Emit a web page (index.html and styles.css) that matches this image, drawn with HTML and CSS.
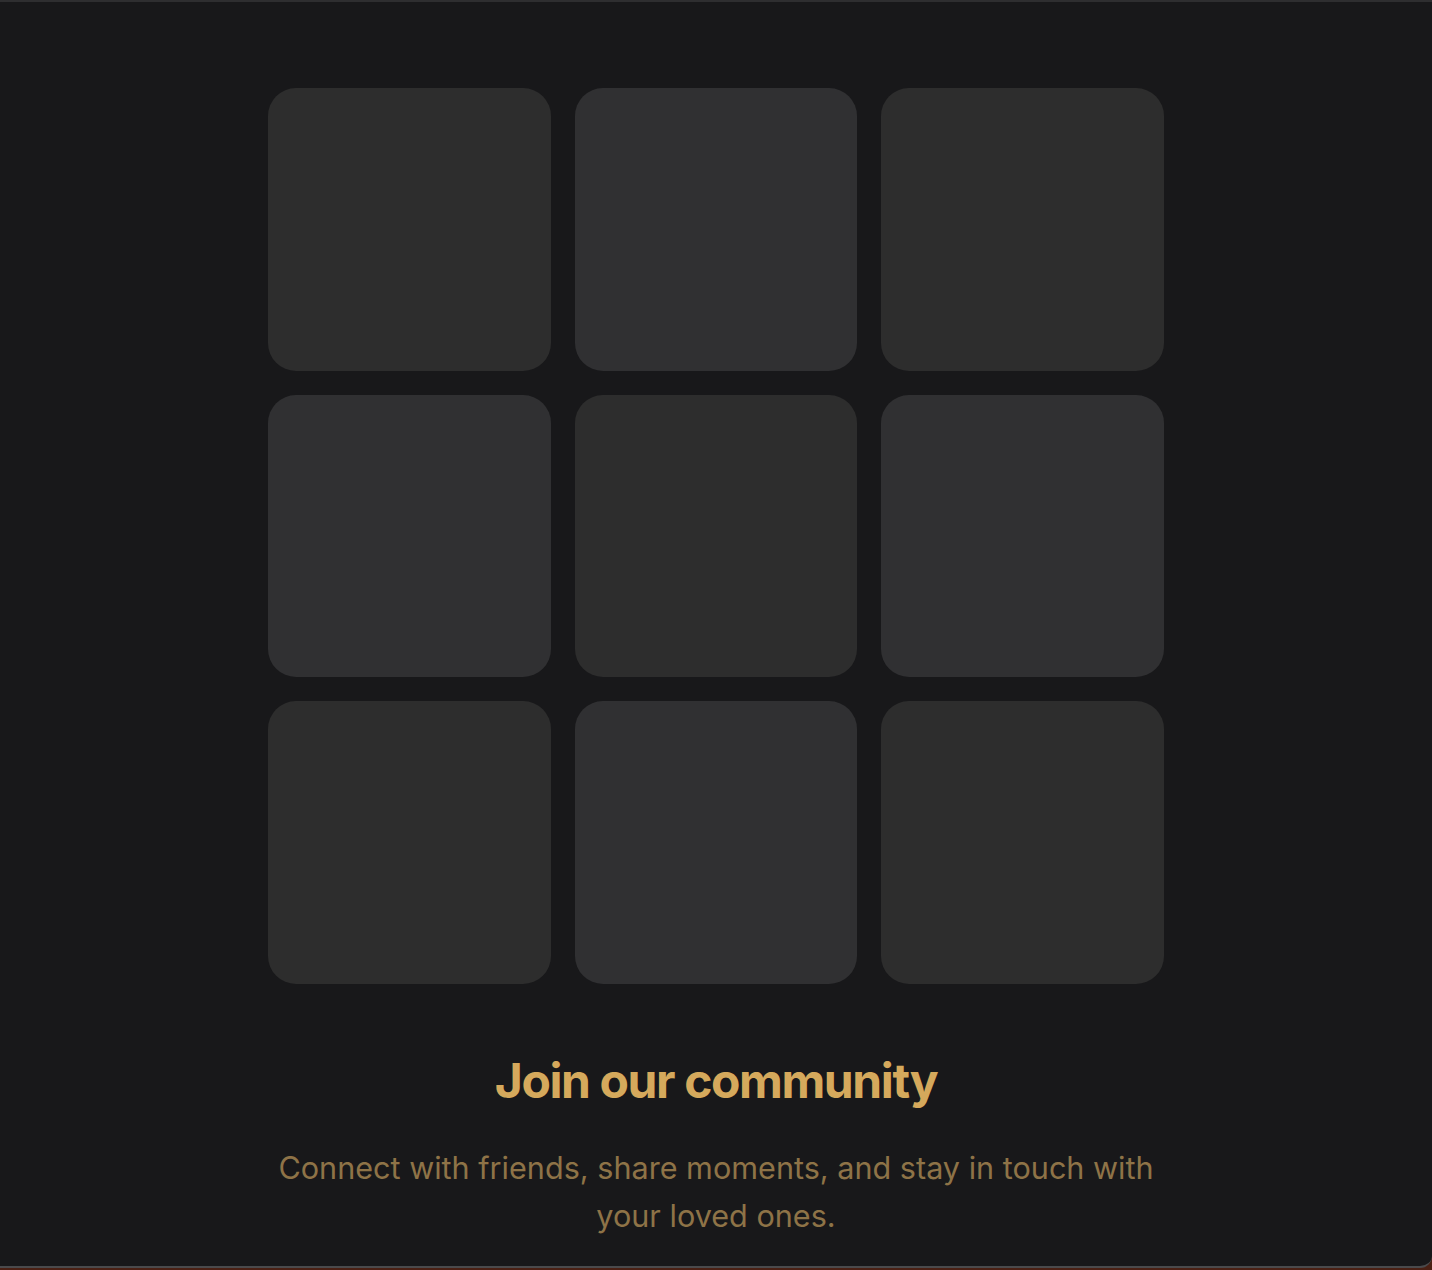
FILE: index.html
```html
<!DOCTYPE html>
<html lang="en">
<head>
  <meta charset="UTF-8" />
  <meta name="viewport" content="width=device-width, initial-scale=1.0" />
  <title>Join our community</title>
  <link rel="stylesheet" href="styles.css">
</head>
<body>
  <div class="frame">
    <div class="grid">
      <div class="tile"></div>
      <div class="tile alt"></div>
      <div class="tile"></div>
      <div class="tile alt"></div>
      <div class="tile"></div>
      <div class="tile alt"></div>
      <div class="tile"></div>
      <div class="tile alt"></div>
      <div class="tile"></div>
    </div>

    <h1>Join our community</h1>
    <p class="lead">Connect with friends, share moments, and stay in touch with your loved ones.</p>
  </div>
</body>
</html>
```

FILE: styles.css
```css
html, body {
  margin: 0;
  padding: 0;
  height: 100%;
  background: #4a2014;
  font-family: Inter, 'Noto Sans', sans-serif;
  overflow: hidden;
}

.frame {
  box-sizing: border-box;
  height: 1268px;
  background: #18181a;
  border-top: 2px solid #2e2e30;
  border-bottom: 2px solid #4a4a4c;
  border-bottom-right-radius: 12px;
  display: flex;
  flex-direction: column;
  align-items: center;
  padding-top: 86px;
}

.grid {
  display: grid;
  grid-template-columns: repeat(3, 1fr);
  gap: 24px;
  width: 896px;
}

.tile {
  aspect-ratio: 1 / 1;
  background: #2d2d2d;
  border-radius: 28px;
}

.tile.alt {
  background: #303032;
}

h1 {
  margin: 67px 0 0;
  font-size: 48px;
  font-weight: 700;
  letter-spacing: -1.4px;
  color: #d5a95c;
}

.lead {
  margin: 34px 0 0;
  max-width: 896px;
  text-align: center;
  font-size: 30.6px;
  line-height: 48px;
  color: #8e7347;
}
```
